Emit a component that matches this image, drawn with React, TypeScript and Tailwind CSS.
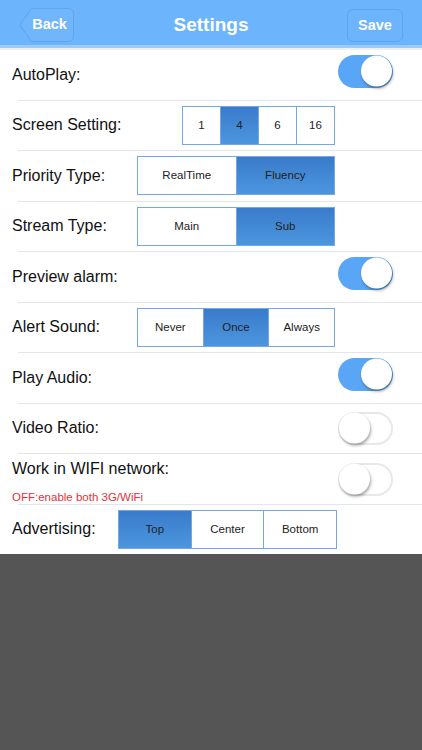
import React, { useState } from 'react';

const FONT = { fontFamily: '"Liberation Sans", Arial, Helvetica, sans-serif' };

function Toggle({ on, onChange }: { on: boolean; onChange: () => void }) {
  return (
    <button
      onClick={onChange}
      className={`relative w-[55px] h-[33px] rounded-full shrink-0 transition-colors ${
        on ? 'bg-[#5aa6f6]' : 'bg-white border-2 border-[#e8e8e8]'
      }`}
    >
      <span
        className={`absolute top-1/2 -translate-y-1/2 w-[31px] h-[31px] rounded-full bg-white shadow-[1px_2px_3px_rgba(0,0,0,0.35)] transition-all ${
          on ? 'right-[1px]' : 'left-[-1px]'
        }`}
      />
    </button>
  );
}

function Segmented({ options, value, onChange, widths }: { options: string[]; value: number; onChange: (i: number) => void; widths: string }) {
  return (
    <div className={`flex h-[39px] border-[1.5px] border-[#72a8ea] bg-white ${widths}`}>
      {options.map((o, i) => (
        <button
          key={o}
          onClick={() => onChange(i)}
          className={`flex-1 flex items-center justify-center text-[11.5px] text-[#222] ${
            i > 0 ? 'border-l-[1.5px] border-[#72a8ea]' : ''
          } ${i === value ? 'bg-gradient-to-b from-[#3a7bcb] to-[#4c96de]' : ''}`}
        >
          {o}
        </button>
      ))}
    </div>
  );
}

function Row({ children, last }: { children: React.ReactNode; last?: boolean }) {
  return (
    <div>
      <div className="h-[49.5px] flex items-center pl-3 pr-[29px]">{children}</div>
      {!last && <div className="ml-[18px] h-px bg-[#e2e5e9]" />}
    </div>
  );
}

export default function App() {
  const [autoPlay, setAutoPlay] = useState(true);
  const [screen, setScreen] = useState(1);
  const [priority, setPriority] = useState(1);
  const [stream, setStream] = useState(1);
  const [previewAlarm, setPreviewAlarm] = useState(true);
  const [alert, setAlert] = useState(1);
  const [audio, setAudio] = useState(true);
  const [ratio, setRatio] = useState(false);
  const [wifi, setWifi] = useState(false);
  const [ad, setAd] = useState(0);

  return (
    <div className="w-[422px] h-[750px] bg-[#555555] flex flex-col" style={FONT}>
      {/* ---- Header ---- */}
      <div className="bg-[#6cb4fb] h-[45px] flex items-end justify-between pl-[19px] pr-[19px] pb-[3px] shrink-0 relative">
        <button className="relative w-[55px] h-[34px] flex items-center justify-center">
          <svg className="absolute inset-0" width="55" height="34" viewBox="0 0 55 34">
            <path
              d="M12.5 0.5 H49.5 a5 5 0 0 1 5 5 V28.5 a5 5 0 0 1 -5 5 H12.5 L0.8 17 Z"
              fill="rgba(255,255,255,0.04)"
              stroke="#5da6ef"
              strokeWidth="1"
              strokeLinejoin="round"
            />
          </svg>
          <span className="relative ml-[6px] text-white font-bold text-[14.5px]">Back</span>
        </button>
        <div className="absolute left-0 right-0 top-[14px] text-center text-white font-bold text-[19px] leading-[22px] pointer-events-none">Settings</div>
        <button className="w-[56px] h-[33px] rounded-[6px] border border-[#5da6ef] text-white font-bold text-[14.5px]">Save</button>
      </div>
      <div className="h-[3px] bg-[#9ccbf7] shrink-0" />
      <div className="h-[2px] bg-[#eef0f2] shrink-0" />

      {/* ---- Settings list ---- */}
      <div className="bg-white text-[16px] text-[#111]">
        <Row>
          <span>AutoPlay:</span>
          <div className="ml-auto"><Toggle on={autoPlay} onChange={() => setAutoPlay(!autoPlay)} /></div>
        </Row>
        <Row>
          <span className="w-[170px]">Screen Setting:</span>
          <Segmented options={['1', '4', '6', '16']} value={screen} onChange={setScreen} widths="w-[153px]" />
        </Row>
        <Row>
          <span className="w-[125px]">Priority Type:</span>
          <Segmented options={['RealTime', 'Fluency']} value={priority} onChange={setPriority} widths="w-[198px]" />
        </Row>
        <Row>
          <span className="w-[125px]">Stream Type:</span>
          <Segmented options={['Main', 'Sub']} value={stream} onChange={setStream} widths="w-[198px]" />
        </Row>
        <Row>
          <span>Preview alarm:</span>
          <div className="ml-auto"><Toggle on={previewAlarm} onChange={() => setPreviewAlarm(!previewAlarm)} /></div>
        </Row>
        <Row>
          <span className="w-[125px]">Alert Sound:</span>
          <Segmented options={['Never', 'Once', 'Always']} value={alert} onChange={setAlert} widths="w-[198px]" />
        </Row>
        <Row>
          <span>Play Audio:</span>
          <div className="ml-auto"><Toggle on={audio} onChange={() => setAudio(!audio)} /></div>
        </Row>
        <Row>
          <span>Video Ratio:</span>
          <div className="ml-auto mt-[5px]"><Toggle on={ratio} onChange={() => setRatio(!ratio)} /></div>
        </Row>
        <Row>
          <div className="flex flex-col self-start pt-[5px]">
            <span className="leading-[19px]">Work in WIFI network:</span>
            <span className="mt-[12px] leading-[14px] text-[11.5px] text-[#e3323b]">OFF:enable both 3G/WiFi</span>
          </div>
          <div className="ml-auto mt-[6px]"><Toggle on={wifi} onChange={() => setWifi(!wifi)} /></div>
        </Row>
        <Row last>
          <span className="w-[106px]">Advertising:</span>
          <Segmented options={['Top', 'Center', 'Bottom']} value={ad} onChange={setAd} widths="w-[219px]" />
        </Row>
      </div>
    </div>
  );
}
